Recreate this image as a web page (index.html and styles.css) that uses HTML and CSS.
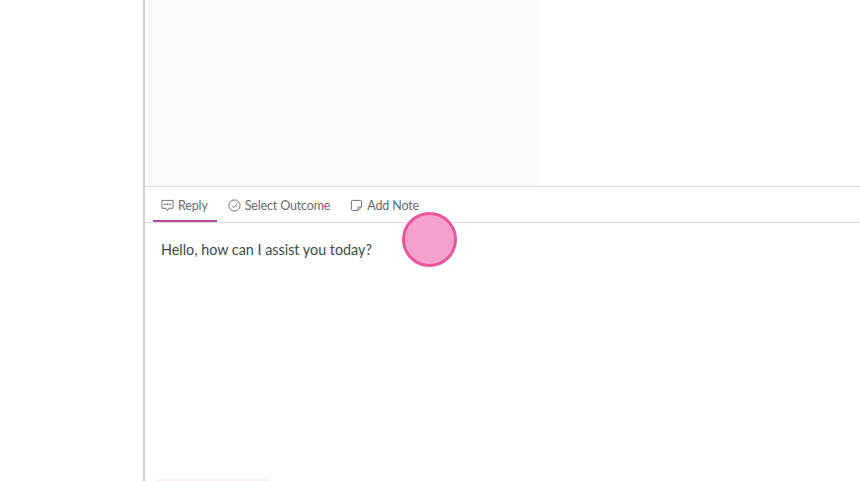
FILE: index.html
```html
<!DOCTYPE html>
<html lang="en">
<head>
<meta charset="utf-8">
<title>Reply</title>
<link rel="stylesheet" href="styles.css">
</head>
<body>
<div class="app">
  <aside class="side"></aside>
  <main class="main">
    <div class="top"><div class="preview"></div></div>
    <nav class="tabs">
      <a class="tab active">
        <svg class="icon" viewBox="0 0 14 14" fill="none" stroke="currentColor" stroke-width="1"><path d="M1 1.500h12v8.500H8.500L7 12.500 5.500 10H1z"/><path d="M3.500 5.800h1.600M6.200 5.800h1.600M8.900 5.800h1.600" stroke-width="1.800"/></svg>
        <span>Reply</span>
      </a>
      <a class="tab">
        <svg class="icon" viewBox="0 0 14 14" fill="none" stroke="currentColor" stroke-width="1"><circle cx="7" cy="7" r="6"/><path d="M4.300 7.200l2 2 3.500-3.800"/></svg>
        <span>Select Outcome</span>
      </a>
      <a class="tab">
        <svg class="icon" viewBox="0 0 14 14" fill="none" stroke="currentColor" stroke-width="1"><path d="M2.800 1.500h8.400a1.300 1.300 0 0 1 1.300 1.300v5.700l-4 4H2.800a1.300 1.300 0 0 1-1.300-1.300V2.800a1.300 1.300 0 0 1 1.300-1.300z"/><path d="M12.500 8.500H9.800a1.300 1.300 0 0 0-1.300 1.300v2.700"/></svg>
        <span>Add Note</span>
      </a>
    </nav>
    <div class="editor">
      <p class="message">Hello, how can I assist you today?</p>
      <div class="send"></div>
    </div>
  </main>
</div>
<div class="marker"></div>
</body>
</html>
```
FILE: styles.css
```css
* { box-sizing: border-box; }
html, body { margin: 0; height: 100%; overflow: hidden; background: #fff; }
body { font-family: "Lato", "Open Sans", sans-serif; color: #3f4540; }
.app { display: flex; height: 481px; }
.side { flex: none; width: 145px; border-right: 2px solid #d0d0d0; }
.main { flex: 1; min-width: 0; display: flex; flex-direction: column; }
.top { height: 186px; flex: none; }
.preview { width: 392px; height: 100%; background: #fafafc; }
.tabs { height: 37px; flex: none; display: flex; gap: 3px; padding-left: 8px; border-top: 1px solid #dcdcdc; border-bottom: 1px solid #dcdcdc; }
.tab { display: flex; align-items: center; gap: 4px; height: 35px; padding: 3px 9px 0 8px; font-size: 12.500px; letter-spacing: -0.150px; color: #666a6e; border-bottom: 2px solid transparent; }
.tab.active { border-bottom-color: #b04a9b; }
.icon { width: 13px; height: 13px; flex: none; }
.editor { flex: 1; display: flex; flex-direction: column; justify-content: space-between; padding: 18px 16px 0 12px; }
.message { margin: 0 0 0 4px; font-size: 14.350px; line-height: 18px; color: #424a44; }
.send { width: 112px; height: 2px; background: #fdeef3; border-radius: 3px 3px 0 0; }
.marker { position: absolute; left: 402px; top: 212px; width: 55px; height: 55px; border-radius: 50%; background: #f6a1cc; border: 3px solid #e9589d; }
```
